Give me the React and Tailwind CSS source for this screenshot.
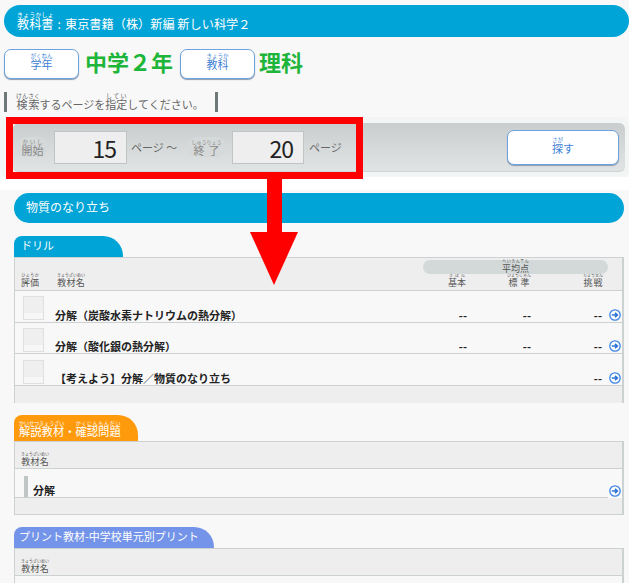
const F = { fontFamily: '"Noto Sans CJK JP", "Noto Sans", sans-serif' };

function R({ t, r, c = "text-[6px]" }) {
  return (
    <ruby className="[ruby-position:over]">
      {t}
      <rt className={`${c} leading-[7px] font-normal`}>{r}</rt>
    </ruby>
  );
}

function Arrow() {
  return (
    <svg width="14" height="14" viewBox="0 0 14 14" className="block shrink-0">
      <circle cx="7" cy="7" r="5.2" fill="#fff" stroke="#3b82e6" strokeWidth="1.3" />
      <path d="M3.8 7h5M7 4.8 9.4 7 7 9.2" fill="none" stroke="#2f74d0" strokeWidth="1.6" />
    </svg>
  );
}

function BlueButton({ children, className }) {
  return (
    <div className={`bg-white border border-[#6fa3e0] rounded-[7px] shadow-[0_1px_1px_#8a9bb0] flex items-end justify-center text-[#3f7fd6] text-[11px] leading-[14px] ${className}`}>
      <span>{children}</span>
    </div>
  );
}

function Row({ title, vals, h = "h-[32px]", pt = "pt-[5px]" }) {
  return (
    <div className={`${h} flex border-b border-[#ccd2d2]`}>
      <div className={`w-[40px] pl-[8px] ${pt} shrink-0`}>
        <div className="w-[21px] h-[24px] bg-[linear-gradient(#efefef_75%,#f7f7f7_75%)] border border-[#dde0e0]" />
      </div>
      <div className="flex-1 self-end font-bold text-[11px] leading-[14px] text-[#222]">{title}</div>
      <div className="self-end flex items-center font-bold text-[11px] leading-[14px] text-[#222]">
        <span className="w-[20px] mr-[44px] text-right">{vals ? "--" : ""}</span>
        <span className="w-[20px] mr-[51px] text-right">{vals ? "--" : ""}</span>
        <span className="w-[20px] mr-[6px] text-right">--</span>
        <Arrow />
      </div>
    </div>
  );
}

export default function App() {
  return (
    <div style={F} className="relative w-[629px] h-[583px] overflow-hidden bg-[#f8f8f8] text-[#555]">
      <div className="pt-[5px] pl-[4px]">
        <div className="h-[32px] rounded-[16px] bg-[#00a4d6] text-white text-[12.2px] leading-[14px] pl-[13px] flex items-end pb-[6px] w-[625px] whitespace-nowrap">
          <span><R t="教科書" r="きょうかしょ" /><span className="mx-[4px]">:</span>東京書籍（株）新編 新しい科学２</span>
        </div>
      </div>

      <div className="flex items-start pl-[4px] mt-[12px] h-[31px]">
        <BlueButton className="w-[75px] h-[30px] pb-[7px]"><R t="学年" r="がくねん" c="text-[5.5px]" /></BlueButton>
        <div className="ml-[6px] w-[95px] text-[22px] leading-[25px] font-bold text-[#1db53a] whitespace-nowrap">中学２年</div>
        <BlueButton className="w-[75px] h-[30px] pb-[7px]"><R t="教科" r="きょうか" c="text-[5.5px]" /></BlueButton>
        <div className="ml-[4px] text-[22px] leading-[25px] font-bold text-[#1db53a]">理科</div>
      </div>

      <div className="flex items-stretch pl-[4px] mt-[12px] h-[20px]">
        <div className="w-[3px] bg-[#6f7878]" />
        <div className="w-[208px] pl-[9px] text-[11px] leading-[14px] text-[#666] flex items-end whitespace-nowrap pb-[1px]">
          <span><R t="検索" r="けんさく" />するページを<R t="指定" r="してい" />してください。</span>
        </div>
        <div className="w-[3px] bg-[#6f7878]" />
      </div>

      <div className="mt-[5px] h-[60px] bg-[#f3f4f4] pl-[13px] pt-[6px] pr-[4px] rounded-[6px]">
        <div className="h-[49px] rounded-[6px] bg-gradient-to-b from-[#c9cdcd] to-[#e1e4e4] border-b border-[#d0d3d3] flex items-center pl-[4px] text-[11px] text-[#666]">
          <span className="w-[31px] h-[20px] flex items-end justify-center rounded-full bg-[#d5d9d9] text-[#888] leading-[13px]"><R t="開始" r="かいし" c="text-[5.5px]" /></span>
          <div className="ml-[6px] w-[73px] h-[33px] bg-[#eeeeee] border border-[#bfc5c5] text-right pr-[10px] text-[23px] tracking-[-1px] leading-[33px] text-[#222]">15</div>
          <span className="ml-[4px] w-[56px] whitespace-nowrap">ページ ～</span>
          <span className="w-[39px] h-[20px] flex items-end justify-center rounded-full bg-[#d5d9d9] text-[#888] leading-[13px] whitespace-nowrap"><R t="終了" r="しゅうりょう" c="text-[5px]" /></span>
          <div className="ml-[6px] w-[72px] h-[33px] bg-[#eeeeee] border border-[#bfc5c5] text-right pr-[10px] text-[23px] tracking-[-1px] leading-[33px] text-[#222]">20</div>
          <span className="ml-[5px]">ページ</span>
          <BlueButton className="ml-auto mr-[6px] w-[112px] h-[35px] pb-[9px]"><R t="探" r="さが" c="text-[5.5px]" />す</BlueButton>
        </div>
      </div>

      <div className="h-[13px] bg-white" />

      <div className="mt-[3px] ml-[14px] w-[610px]">
        <div className="h-[30px] rounded-[15px] bg-[#00a4d6] text-white text-[12px] leading-[28px] pl-[12px]">物質のなり立ち</div>

        <div className="mt-[13px] w-[109px] h-[21px] bg-[#00a4d6] rounded-tl-[8px] rounded-tr-[20px] text-white text-[11px] leading-[18px] pl-[7px]">ドリル</div>
        <div className="h-[146px] border border-[#ccd2d2] border-r-2">
          <div className="h-[33px] bg-[#eeeeee] border-b border-[#ccd2d2] flex items-end relative text-[9px] leading-[11px] text-[#555] pb-[2px]">
            <span className="w-[40px] pl-[6px]"><R t="評価" r="ひょうか" c="text-[4px]" /></span>
            <span className="ml-[2px]"><R t="教材名" r="きょうざいめい" c="text-[4px]" /></span>
            <div className="absolute left-[408px] top-[2px] w-[185px] h-[14px] rounded-full bg-[#d3d9d9] flex items-end justify-center text-[9px] leading-[11px]"><R t="平均点" r="へいきんてん" c="text-[4px]" /></div>
            <span className="ml-auto mr-[41px]"><R t="基本" r="きほん" c="text-[4px]" /></span>
            <span className="mr-[52px]"><R t="標準" r="ひょうじゅん" c="text-[4px]" /></span>
            <span className="mr-[19px]"><R t="挑戦" r="ちょうせん" c="text-[4px]" /></span>
          </div>
          <Row title="分解（炭酸水素ナトリウムの熱分解）" vals />
          <Row title="分解（酸化銀の熱分解）" vals h="h-[31px]" />
          <Row title="【考えよう】分解／物質のなり立ち" pt="pt-[6px]" />
          <div className="h-[17px] bg-[#eeeeee]" />
        </div>

        <div className="mt-[12px] w-[124px] h-[26px] bg-[#ff9a0d] rounded-tl-[8px] rounded-tr-[20px] text-white text-[11.3px] leading-[13px] pl-[5px] flex items-end pb-[3px] whitespace-nowrap">
          <span><R t="解説教材" r="かいせつきょうざい" c="text-[5px]" />・<R t="確認問題" r="かくにんもんだい" c="text-[5px]" /></span>
        </div>
        <div className="h-[74px] border border-[#ccd2d2] border-r-2">
          <div className="h-[27px] bg-[#eeeeee] border-b border-[#ccd2d2] flex items-end pl-[6px] pb-[1px] text-[9px] leading-[11px]">
            <R t="教材名" r="きょうざいめい" c="text-[4px]" />
          </div>
          <div className="h-[29px] flex border-b border-[#ccd2d2]">
            <div className="ml-[9px] mt-[7px] w-[4px] bg-[#bfc5c5]" />
            <div className="flex-1 self-end pl-[5px] font-bold text-[11px] leading-[14px] text-[#222]">分解</div>
            <div className="self-end mb-[-1px] bg-[#fafafa]"><Arrow /></div>
          </div>
          <div className="h-[16px] bg-[#eeeeee]" />
        </div>

        <div className="mt-[12px] w-[200px] h-[21px] bg-[#7394e8] rounded-tl-[8px] rounded-tr-[20px] text-white text-[11px] leading-[18px] pl-[5px] whitespace-nowrap">プリント教材-中学校単元別プリント</div>
        <div className="h-[40px] border border-[#ccd2d2] border-r-2 border-b-0">
          <div className="h-[27px] bg-[#eeeeee] border-b border-[#ccd2d2] flex items-end pl-[6px] pb-[1px] text-[9px] leading-[11px]">
            <R t="教材名" r="きょうざいめい" c="text-[4px]" />
          </div>
        </div>
      </div>

      <div className="absolute left-[6px] top-[117px] w-[357px] h-[62px] border-[7px] border-[#ff0000]" />
      <div className="absolute left-[267px] top-[179px] w-[15px] h-[53px] bg-[#ff0000]" />
      <div className="absolute left-[250px] top-[232px] w-0 h-0 border-l-[24px] border-r-[24px] border-t-[53px] border-l-transparent border-r-transparent border-t-[#ff0000]" />
    </div>
  );
}
